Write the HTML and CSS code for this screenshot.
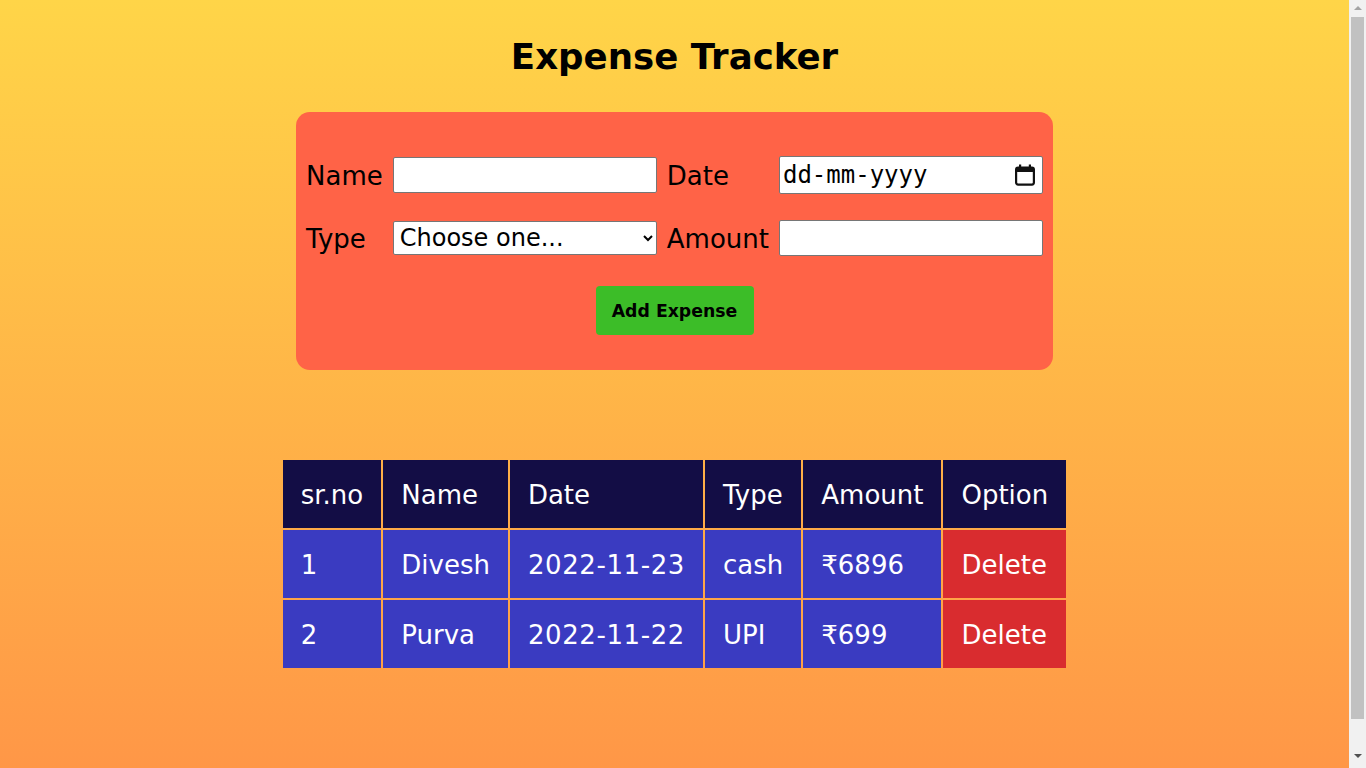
FILE: index.html
```html
<!DOCTYPE html>
<html lang="en">
<head>
<meta charset="utf-8">
<title>Expense Tracker</title>
<link rel="stylesheet" href="styles.css">
</head>
<body>
<main class="page">
  <h1 class="title">Expense Tracker</h1>
  <form class="card" onsubmit="return false">
    <div class="fields">
      <label class="lbl" for="name">Name</label>
      <input class="field" id="name" type="text">
      <label class="lbl" for="date">Date</label>
      <div class="field date-field" id="date">
        <span class="date-text">dd-mm-yyyy</span>
        <svg class="cal" viewBox="0 0 22 22" width="22" height="22" aria-hidden="true">
          <rect x="5" y="0.5" width="2.2" height="4" fill="#111"/>
          <rect x="14.8" y="0.5" width="2.2" height="4" fill="#111"/>
          <rect x="2.1" y="3.6" width="17.8" height="17" rx="2" fill="none" stroke="#111" stroke-width="2.2"/>
          <rect x="2" y="3.5" width="18" height="4.5" rx="1.5" fill="#111"/>
        </svg>
      </div>
      <label class="lbl" for="type">Type</label>
      <select class="field sel" id="type">
        <option>Choose one...</option>
        <option>cash</option>
        <option>UPI</option>
      </select>
      <label class="lbl" for="amount">Amount</label>
      <input class="field" id="amount" type="text">
    </div>
    <div class="actions">
      <button class="add-btn" type="button">Add Expense</button>
    </div>
  </form>

  <table class="expenses">
    <thead>
      <tr class="head-row">
        <th>sr.no</th><th>Name</th><th>Date</th><th>Type</th><th>Amount</th><th>Option</th>
      </tr>
    </thead>
    <tbody>
      <tr class="row">
        <td>1</td><td>Divesh</td><td class="num">2022-11-23</td><td>cash</td><td>₹6896</td><td class="del">Delete</td>
      </tr>
      <tr class="row">
        <td>2</td><td>Purva</td><td class="num">2022-11-22</td><td>UPI</td><td>₹699</td><td class="del">Delete</td>
      </tr>
    </tbody>
  </table>
</main>
<div class="scrollbar" aria-hidden="true">
  <span class="sb-arrow sb-up"></span>
  <span class="sb-thumb"></span>
  <span class="sb-arrow sb-down"></span>
</div>
</body>
</html>
```
FILE: styles.css
```css
html {
  background: linear-gradient(to bottom, #ffd548 0%, #ff9447 100%);
  min-height: 100%;
}
body {
  margin: 0 17px 0 0;
  font-family: "DejaVu Sans", Verdana, sans-serif;
  color: #000;
}
.page {
  display: flex;
  flex-direction: column;
  align-items: center;
  padding: 36px 0 133px;
}
.title {
  margin: 0;
  font-size: 35.6px;
  font-weight: bold;
  line-height: 41px;
}
.card {
  margin-top: 35px;
  width: 757px;
  box-sizing: border-box;
  background: #ff6347;
  border-radius: 14px;
  padding: 44px 0 35px;
  display: flex;
  flex-direction: column;
  align-items: center;
}
.fields {
  display: grid;
  grid-template-columns: auto 264px auto 264px;
  column-gap: 10px;
  row-gap: 26px;
  align-items: center;
}
.lbl {
  font-size: 26px;
  line-height: 30px;
  padding-top: 2px;
}
.field {
  box-sizing: border-box;
  width: 264px;
  height: 36px;
  border: 1px solid #767676;
  border-radius: 2px;
  background: #fff;
  font-family: "DejaVu Sans", sans-serif;
  font-size: 24px;
  margin: 0;
}
.date-field {
  height: 38px;
  display: flex;
  align-items: center;
  justify-content: space-between;
  padding: 0 6px 0 3px;
}
.date-text {
  font-family: "DejaVu Sans Mono", monospace;
  font-size: 24px;
  color: #000;
}
.cal {
  display: block;
}
.sel {
  height: 34px;
  padding: 0 2px;
  color: #000;
}
.actions {
  margin-top: 30px;
}
.add-btn {
  background: #3cbd28;
  border: none;
  border-radius: 4px;
  width: 158px;
  height: 49px;
  font-family: "DejaVu Sans", sans-serif;
  font-weight: bold;
  font-size: 17.3px;
  color: #000;
  padding: 0;
}
.expenses {
  margin-top: 88px;
  border-spacing: 2px;
  color: #fff;
  font-size: 26px;
}
.expenses th,
.expenses td {
  padding: 20px 18px 18px;
  text-align: left;
  font-weight: normal;
  line-height: 30px;
}
.expenses td.num {
  letter-spacing: 0.6px;
}
.head-row th {
  background: #130d45;
}
.row td {
  background: #3a3bc1;
}
.row td.del {
  background: #d92c2f;
}

/* window scrollbar (drawn, overlays the right edge of the viewport) */
.scrollbar {
  position: fixed;
  top: 0;
  right: 0;
  width: 17px;
  height: 100vh;
  background: #f1f1f1;
  display: flex;
  flex-direction: column;
  align-items: center;
}
.sb-arrow {
  width: 0;
  height: 0;
  border-left: 4px solid transparent;
  border-right: 4px solid transparent;
}
.sb-up {
  margin-top: 6px;
  border-bottom: 4px solid #a3a3a3;
}
.sb-down {
  margin-top: 35px;
  border-top: 4px solid #505050;
}
.sb-thumb {
  margin-top: 7px;
  width: 13px;
  height: 702px;
  background: #c1c1c1;
}
```
